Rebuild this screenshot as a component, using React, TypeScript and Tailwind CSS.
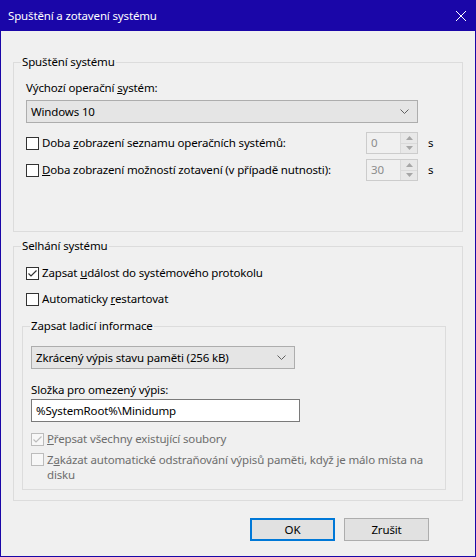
import React from 'react';

const font = "font-['Noto_Sans',sans-serif]";

function Check({ checked = false, disabled = false }: { checked?: boolean; disabled?: boolean }) {
  return (
    <span
      className={`relative flex shrink-0 w-[13px] h-[13px] border ${
        disabled ? 'border-[#bcbcbc] bg-[#f7f7f7]' : 'border-[#333333] bg-white'
      }`}
    >
      {checked && (
        <svg width="11" height="11" viewBox="0 0 11 11" className="absolute left-0 top-0">
          <path
            d="M1.5 5.5 L4 8 L9.5 2.5"
            fill="none"
            stroke={disabled ? '#bcbcbc' : '#333333'}
            strokeWidth="1.2"
          />
        </svg>
      )}
    </span>
  );
}

function Chevron() {
  return (
    <svg width="9" height="5" viewBox="0 0 9 5">
      <path d="M0.5 0.5 L4.5 4.5 L8.5 0.5" fill="none" stroke="#606060" strokeWidth="1" />
    </svg>
  );
}

function Combo({ value, width }: { value: string; width: string }) {
  return (
    <div className={`flex items-center justify-between h-[23px] border border-[#adadad] bg-[#e5e5e5] pl-[4px] pr-[8px] ${width}`}>
      <span>{value}</span>
      <Chevron />
    </div>
  );
}

function Spinner({ value }: { value: string }) {
  return (
    <div className="flex w-[52px] h-[22px] border border-[#cccccc] bg-[#f0f0f0]">
      <span className="flex-1 pl-[4px] leading-[20px] text-[#8c8c8c]">{value}</span>
      <div className="flex flex-col w-[17px] border-l border-[#dadada]">
        <div className="flex flex-1 items-center justify-center border-b border-[#dadada] bg-[#e8e8e8]">
          <svg width="7" height="4" viewBox="0 0 7 4">
            <path d="M0 4 L3.5 0 L7 4 Z" fill="#a6a6a6" />
          </svg>
        </div>
        <div className="flex flex-1 items-center justify-center bg-[#e8e8e8]">
          <svg width="7" height="4" viewBox="0 0 7 4">
            <path d="M0 0 L3.5 4 L7 0 Z" fill="#a6a6a6" />
          </svg>
        </div>
      </div>
    </div>
  );
}

// group box: the caption sits over the top border line
function GroupTitle({ children }: { children: React.ReactNode }) {
  return (
    <span className="absolute left-[7px] -top-[9px] px-[1px] bg-[#f0f0f0] whitespace-nowrap">{children}</span>
  );
}

export default function App() {
  return (
    <div className={`${font} text-[11.5px] tracking-[-0.15px] leading-[16px] text-black w-[476px] h-[557px] flex flex-col bg-[#f0f0f0] border-x border-b border-[#1a06a8]`}>
      {/* title bar */}
      <div className="flex items-center justify-between h-[31px] bg-[#1a06a8] pl-[8px] pr-[10px] -mx-px text-white">
        <span>Spuštění a zotavení systému</span>
        <svg width="10" height="10" viewBox="0 0 10 10">
          <path d="M0 0 L10 10 M10 0 L0 10" stroke="white" strokeWidth="1" />
        </svg>
      </div>

      {/* Spuštění systému */}
      <div className="relative ml-[12px] mt-[31px] w-[450px] border border-[#dcdcdc] pt-[17px] pl-[12px] pb-[50px]">
        <GroupTitle>Spuštění systému</GroupTitle>
        <div>
          Výchozí operační <u>s</u>ystém:
        </div>
        <div className="mt-[4px]">
          <Combo value="Windows 10" width="w-[392px]" />
        </div>
        <div className="mt-[9px] flex items-center">
          <div className="flex items-center gap-[3px] w-[340px]">
            <Check />
            <span>
              Doba <u>z</u>obrazení seznamu operačních systémů:
            </span>
          </div>
          <Spinner value="0" />
          <span className="ml-[10px]">s</span>
        </div>
        <div className="mt-[5px] flex items-center">
          <div className="flex items-center gap-[3px] w-[340px]">
            <Check />
            <span>
              <u>D</u>oba zobrazení možností zotavení (v případě nutnosti):
            </span>
          </div>
          <Spinner value="30" />
          <span className="ml-[10px]">s</span>
        </div>
      </div>

      {/* Selhání systému */}
      <div className="relative ml-[12px] mt-[14px] w-[450px] border border-[#dcdcdc] pt-[18px] pl-[8px] pr-[16px] pb-[10px]">
        <GroupTitle>Selhání systému</GroupTitle>
        <div className="flex items-center gap-[3px] pl-[4px]">
          <Check checked />
          <span>
            Zapsat <u>u</u>dálost do systémového protokolu
          </span>
        </div>
        <div className="mt-[10px] flex items-center gap-[3px] pl-[4px]">
          <Check />
          <span>
            Automaticky <u>r</u>estartovat
          </span>
        </div>

        <div className="relative mt-[19px] border border-[#dcdcdc] pt-[19px] pl-[8px] pr-[8px] pb-[7px]">
          <GroupTitle>Zapsat ladicí informace</GroupTitle>
          <Combo value="Zkrácený výpis stavu paměti (256 kB)" width="w-[264px]" />
          <div className="mt-[13px]">Složka pro omezený výpis:</div>
          <div className="mt-[1px] w-[269px] h-[23px] border border-[#7a7a7a] bg-white pl-[4px] leading-[21px]">
            %SystemRoot%\Minidump
          </div>
          <div className="mt-[9px] flex items-center gap-[3px] text-[#6d6d6d]">
            <Check checked disabled />
            <span>
              <u>P</u>řepsat všechny existující soubory
            </span>
          </div>
          <div className="mt-[5px] flex items-start gap-[3px] text-[#6d6d6d] leading-[15px]">
            <span className="mt-[1px]">
              <Check disabled />
            </span>
            <span className="whitespace-nowrap">
              Z<u>a</u>kázat automatické odstraňování výpisů paměti, když je málo místa na
              <br />
              disku
            </span>
          </div>
        </div>
      </div>

      {/* buttons */}
      <div className="mt-[17px] flex justify-end gap-[9px] pr-[46px]">
        <button className="w-[85px] h-[23px] border-2 border-[#0078d7] bg-[#e1e1e1]">OK</button>
        <button className="w-[85px] h-[23px] border border-[#adadad] bg-[#e1e1e1]">Zrušit</button>
      </div>
    </div>
  );
}
